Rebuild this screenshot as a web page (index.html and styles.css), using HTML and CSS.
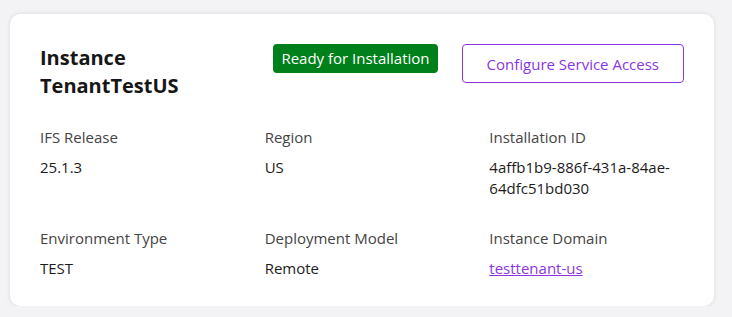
FILE: index.html
```html
<!DOCTYPE html>
<html lang="en">
<head>
  <meta charset="UTF-8"/>
  <meta name="viewport" content="width=device-width, initial-scale=1.0"/>
  <title>Instance TenantTestUS</title>
  <link rel="stylesheet" href="styles.css">
</head>
<body>

  <div class="instance-card">
    <div class="card-header">
      <h1>Instance<br>TenantTestUS</h1>
      <div class="header-actions">
        <span class="status-badge">Ready for Installation</span>
        <button class="outline-btn">Configure Service Access</button>
      </div>
    </div>

    <div class="details">
      <div class="detail">
        <div class="label">IFS Release</div>
        <div class="value">25.1.3</div>
      </div>
      <div class="detail">
        <div class="label">Region</div>
        <div class="value">US</div>
      </div>
      <div class="detail">
        <div class="label">Installation ID</div>
        <div class="value">4affb1b9-886f-431a-84ae-64dfc51bd030</div>
      </div>
      <div class="detail">
        <div class="label">Environment Type</div>
        <div class="value">TEST</div>
      </div>
      <div class="detail">
        <div class="label">Deployment Model</div>
        <div class="value">Remote</div>
      </div>
      <div class="detail">
        <div class="label">Instance Domain</div>
        <div class="value"><a href="#">testtenant-us</a></div>
      </div>
    </div>
  </div>

</body>
</html>
```

FILE: styles.css
```css
html, body {
  margin: 0;
  padding: 0;
  background-color: #f3f2f4;
  font-family: "Open Sans", "Noto Sans", sans-serif;
  color: #1c1c1c;
}

body {
  padding: 14px 18px 0 10px;
}

.instance-card {
  background-color: #fff;
  border-radius: 10px;
  box-shadow: 0 0 4px rgba(0, 0, 0, 0.12);
  padding: 30px 30px 27px 30px;
  height: 292px;
  box-sizing: border-box;
}

.card-header {
  display: flex;
  justify-content: space-between;
  align-items: flex-start;
  margin-bottom: 27px;
}

h1 {
  margin: 0;
  font-size: 20px;
  line-height: 28px;
  font-weight: 700;
  color: #161616;
}

.header-actions {
  display: flex;
  align-items: flex-start;
  gap: 24px;
}

.status-badge {
  background-color: #00801a;
  color: #fff;
  font-size: 15px;
  line-height: 29px;
  padding: 0 8px;
  border-radius: 4px;
}

.outline-btn {
  background: #fff;
  border: 1px solid #8b35e0;
  color: #8b35e0;
  font-family: inherit;
  font-size: 15px;
  height: 39px;
  padding: 0 24px;
  border-radius: 4px;
  cursor: pointer;
}

.details {
  display: grid;
  grid-template-columns: repeat(3, 1fr);
  column-gap: 30px;
  row-gap: 29px;
  font-size: 15px;
  line-height: 21px;
}

.label {
  color: #444;
  margin-bottom: 9px;
}

.value {
  color: #1c1c1c;
}

.value a {
  color: #8b35e0;
}
```
